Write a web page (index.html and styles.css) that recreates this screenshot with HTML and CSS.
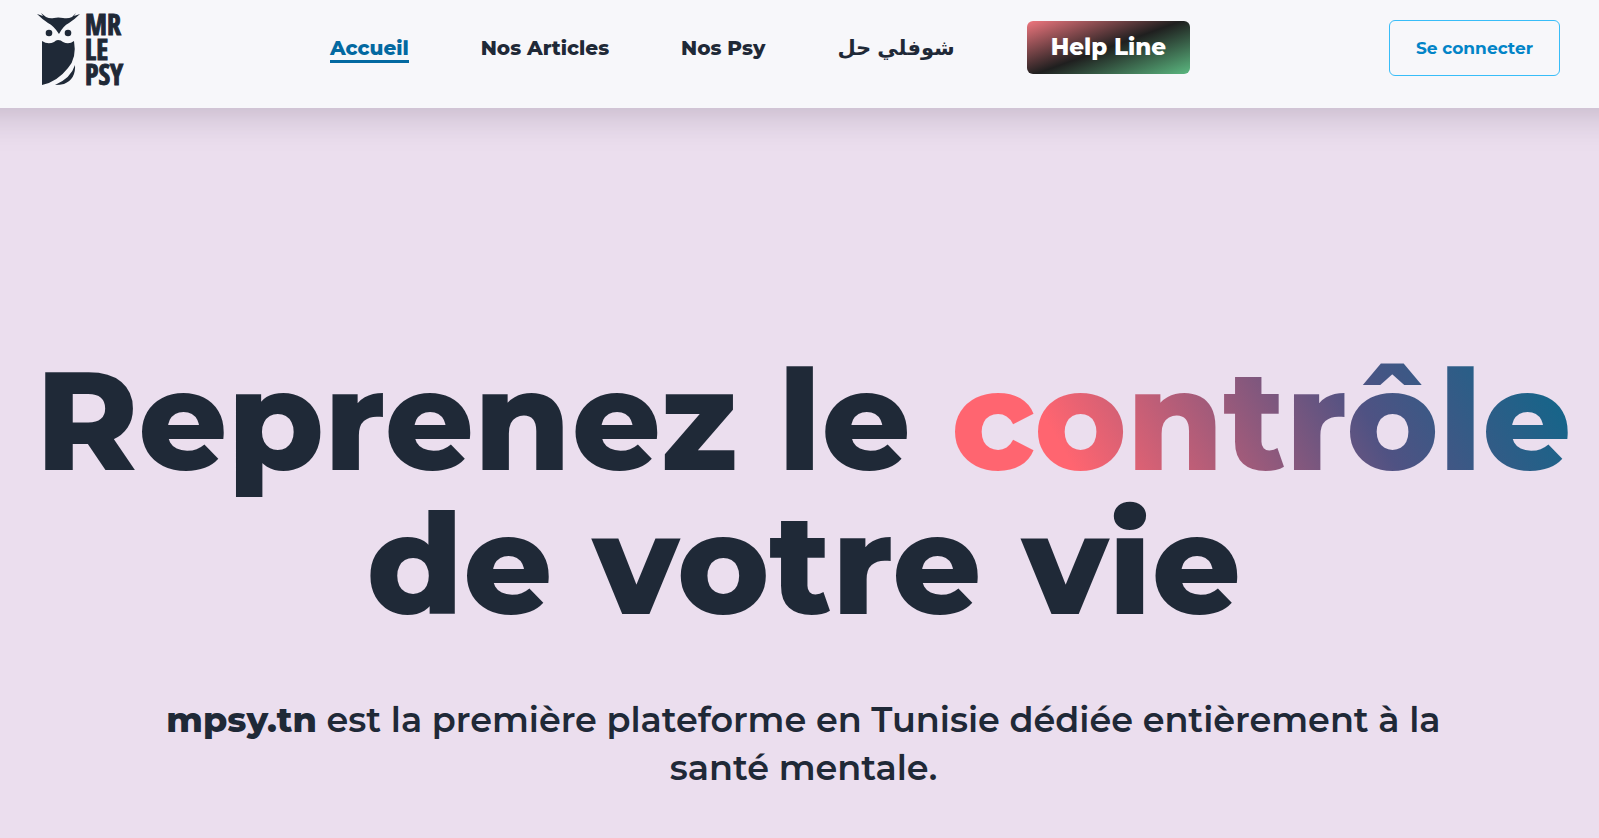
FILE: index.html
```html
<!DOCTYPE html>
<html lang="fr">
<head>
    <meta charset="UTF-8">
    <meta name="viewport" content="width=device-width, initial-scale=1.0">
    <title>Mr Le Psy</title>
    <link rel="stylesheet" href="styles.css">
</head>
<body>

    <header class="header">
        <a href="#" class="logo">
            <svg class="logo-owl" width="44" height="74" viewBox="0 0 44 74" aria-hidden="true">
                <path d="M0 2L6 4L4 1L9 5Q13 7 17 6Q21 5 26 6Q31 7 35 5L39 1L37 4L43 2Q38 7 32 11Q26 14 22 22Q17 14 11 11Q5 7 0 2Z"/>
                <circle cx="12" cy="21" r="3.3"/>
                <circle cx="31" cy="21" r="3.3"/>
                <path d="M5 29Q11 33 17 30Q19 28 21 28Q24 28 26 30Q32 33 37 29Q40 46 31 56Q20 70 5 73Z"/>
                <path d="M38 53Q39 67 27 72Q23 73 18 73Q34 66 38 53Z"/>
            </svg>
            <span class="logo-name">MR<br>LE<br>PSY</span>
        </a>

        <nav class="nav">
            <a href="#" class="nav-link active">Accueil</a>
            <a href="#" class="nav-link">Nos Articles</a>
            <a href="#" class="nav-link">Nos Psy</a>
            <a href="#" class="nav-link nav-arabic" lang="ar">شوفلي حل</a>
            <a href="#" class="help-line">Help Line</a>
        </nav>

        <button type="button" class="login">Se connecter</button>
    </header>

    <main class="hero">
        <h1 class="hero-title">Reprenez le <span class="gradient">contrôle</span><br>de votre vie</h1>
        <p class="hero-text"><strong>mpsy.tn</strong> est la première plateforme en Tunisie dédiée entièrement à la santé mentale.</p>
    </main>

</body>
</html>
```
FILE: styles.css
```css
* {
    box-sizing: border-box;
}
body {
    margin: 0;
    min-height: 100vh;
    font-family: Montserrat, Inter, "DejaVu Sans", sans-serif;
    color: #1f2937;
    background-color: #ebdeee;
    overflow-x: hidden;
}
a {
    color: inherit;
    text-decoration: none;
}
.header {
    display: flex;
    justify-content: space-between;
    align-items: flex-start;
    height: 108px;
    padding: 12px 39px 0 37px;
    background-color: #f7f7fa;
    box-shadow: 0 -40px 36px 44px rgba(31, 20, 40, 0.22);
}
.logo {
    display: flex;
    gap: 4px;
    padding-right: 8px;
}
.logo-owl {
    fill: #1f2937;
}
.logo-name {
    font-family: "Liberation Sans Narrow", "Open Sans Condensed", "Liberation Sans", sans-serif;
    font-size: 28px;
    font-weight: bold;
    line-height: 25px;
    -webkit-text-stroke: 1px #1f2937;
}
.nav {
    display: flex;
    align-items: center;
    gap: 72px;
    padding-top: 9px;
}
.nav-link {
    border: solid transparent;
    border-width: 3px 0;
    font-size: 20px;
    font-weight: 800;
    line-height: 24px;
}
.nav-link.active {
    color: #0369a1;
    border-bottom-color: #0369a1;
}
.nav-arabic {
    font-size: 21px;
}
.help-line {
    padding: 12px 24px;
    border-radius: 6px;
    font-size: 23px;
    font-weight: 800;
    line-height: 29px;
    color: white;
    background: linear-gradient(160deg, #ef767e, #1f1f1f 50%, #5bb880);
}
.login {
    margin-top: 8px;
    padding: 16px 26px;
    border: 1px solid #38bdf8;
    border-radius: 6px;
    font-family: inherit;
    font-size: 17px;
    font-weight: 700;
    line-height: 22px;
    color: #0284c7;
    background: transparent;
    cursor: pointer;
}
.hero {
    padding: 240px 24px 40px 32px;
    text-align: center;
}
.hero-title {
    margin: 0;
    font-size: 139px;
    font-weight: 800;
    line-height: 144px;
}
.gradient {
    color: transparent;
    background: linear-gradient(60deg, #ff6570 20%, #4f5283 65%, #12668a 95%);
    -webkit-background-clip: text;
    background-clip: text;
}
.hero-text {
    max-width: 1320px;
    margin: 60px auto 0;
    font-size: 35px;
    font-weight: 600;
    line-height: 48px;
}
.hero-text strong {
    font-weight: 800;
}
```
